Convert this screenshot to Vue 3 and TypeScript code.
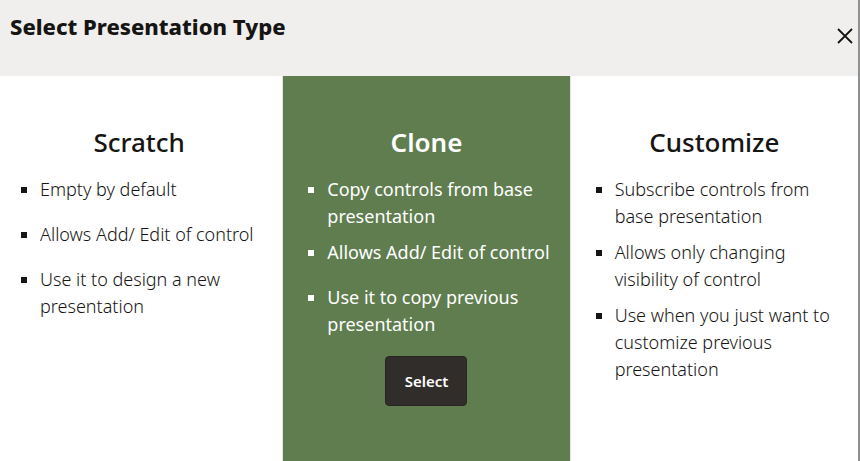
<script setup lang="ts">
import { ref } from 'vue'

interface PresentationType {
  id: string
  title: string
  points: { text: string; roomy?: boolean }[]
}

const types: PresentationType[] = [
  {
    id: 'scratch',
    title: 'Scratch',
    points: [
      { text: 'Empty by default', roomy: true },
      { text: 'Allows Add/ Edit of control', roomy: true },
      { text: 'Use it to design a new presentation' },
    ],
  },
  {
    id: 'clone',
    title: 'Clone',
    points: [
      { text: 'Copy controls from base presentation' },
      { text: 'Allows Add/ Edit of control', roomy: true },
      { text: 'Use it to copy previous presentation' },
    ],
  },
  {
    id: 'customize',
    title: 'Customize',
    points: [
      { text: 'Subscribe controls from base presentation' },
      { text: 'Allows only changing visibility of control' },
      { text: 'Use when you just want to customize previous presentation' },
    ],
  },
]

const active = ref('clone')
</script>

<template>
  <section class="dialog" role="dialog" aria-labelledby="dialog-title">
    <header class="header">
      <h1 id="dialog-title" class="title">Select Presentation Type</h1>
      <button class="close" type="button" aria-label="Close">
        <svg viewBox="0 0 16 16" width="16" height="16" aria-hidden="true">
          <path d="M1 1 15 15M15 1 1 15" fill="none" stroke="currentColor" stroke-width="1.8" />
        </svg>
      </button>
    </header>
    <div class="cards">
      <article
        v-for="item in types"
        :key="item.id"
        class="card"
        :class="{ active: item.id === active }"
        @mouseenter="active = item.id"
      >
        <h2 class="card-title">{{ item.title }}</h2>
        <ul class="points">
          <li v-for="point in item.points" :key="point.text" class="point" :class="{ roomy: point.roomy }">
            {{ point.text }}
          </li>
        </ul>
        <button v-if="item.id === active" class="select" type="button">Select</button>
      </article>
    </div>
  </section>
</template>

<style>
body {
  margin: 0;
  background: #fff;
}
</style>

<style scoped>
.dialog {
  box-sizing: border-box;
  min-height: 100vh;
  display: flex;
  flex-direction: column;
  overflow: hidden;
  border-right: 2px solid #8f8f8f;
  font-family: "Noto Sans", "Open Sans", sans-serif;
  color: #161513;
}
.header {
  display: flex;
  justify-content: space-between;
  min-height: 76px;
  padding-left: 10px;
  background: #f0efed;
}
.title {
  margin: 11px 0 0;
  font-size: 22px;
  line-height: 30px;
  font-weight: 800;
}
.close {
  align-self: flex-start;
  display: flex;
  margin-top: 24px;
  padding: 4px 5px;
  border: 0;
  background: none;
  color: #161513;
}
.cards {
  flex: 1;
  display: grid;
  grid-template-columns: repeat(3, minmax(0, 1fr));
  margin-left: -4px;
}
.card {
  display: flex;
  flex-direction: column;
  align-items: center;
  padding: 48px 8px 24px;
  border-right: 1px solid #e4e4e2;
}
.card:last-child {
  border-right: 0;
}
.active {
  background: #5f7d4f;
  color: #fff;
}
.card-title {
  margin: 0;
  font-size: 26px;
  line-height: 36px;
  font-weight: 500;
}
.active .card-title {
  font-weight: 600;
}
.points {
  align-self: stretch;
  margin: 16px 0 0;
  padding: 0 0 0 36px;
  list-style: none;
}
.point {
  position: relative;
  margin-bottom: 9px;
  font-size: 18px;
  line-height: 27px;
  font-weight: 300;
}
.point::before {
  content: "";
  position: absolute;
  left: -19px;
  top: 11px;
  width: 6px;
  height: 6px;
  background: currentColor;
}
.roomy {
  margin-bottom: 18px;
}
.active .point {
  font-weight: 400;
}
.select {
  margin-top: 9px;
  width: 82px;
  height: 50px;
  border: 1px solid #292522;
  border-radius: 4px;
  background: #312d2a;
  color: #fff;
  font: 600 15px/20px "Noto Sans", "Open Sans", sans-serif;
}
</style>
